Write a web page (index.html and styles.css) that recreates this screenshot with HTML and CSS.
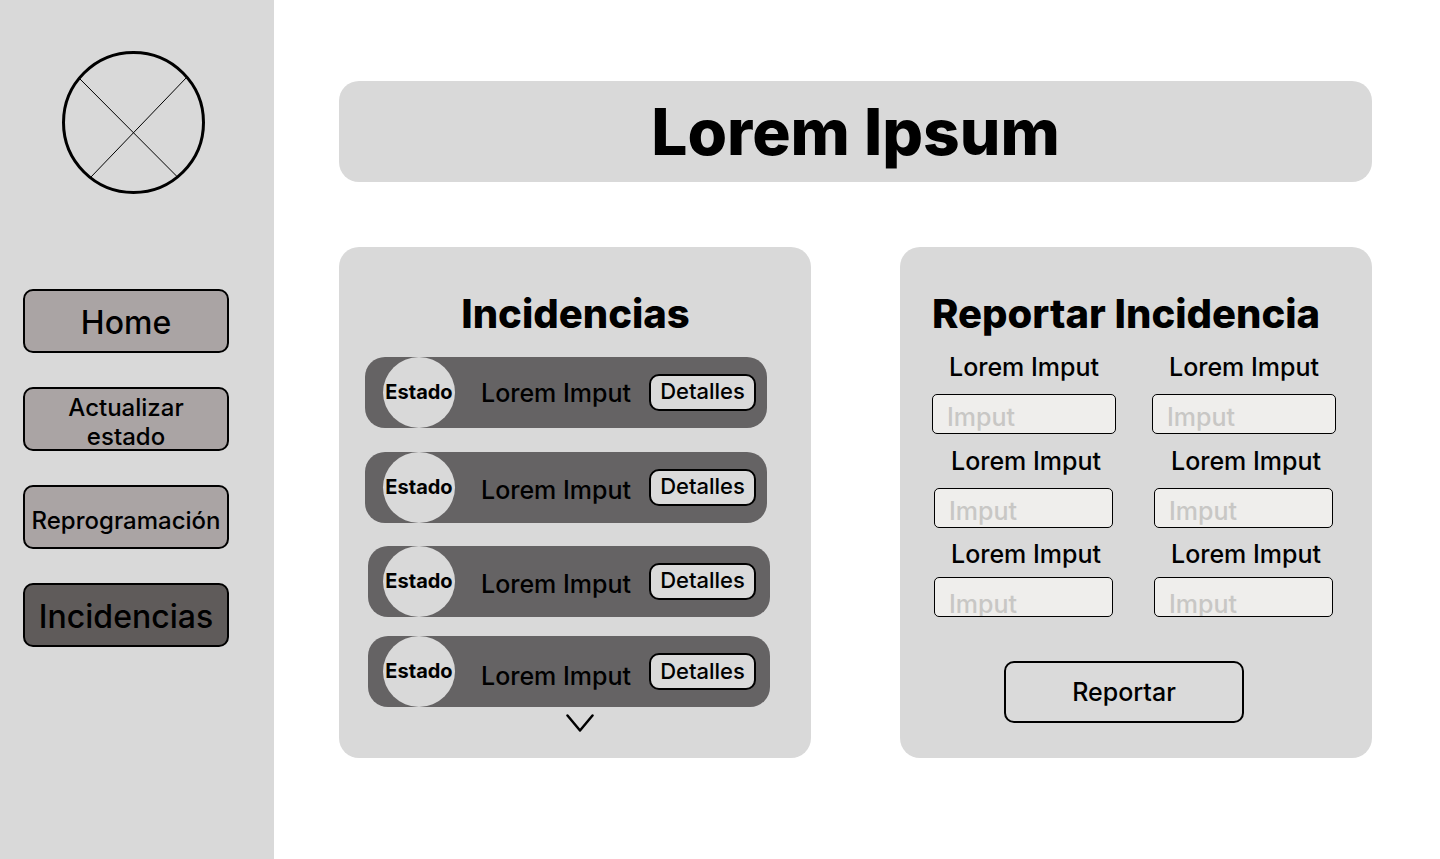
FILE: index.html
```html
<!DOCTYPE html>
<html lang="es">
<head>
  <meta charset="utf-8">
  <meta name="viewport" content="width=device-width, initial-scale=1">
  <title>Incidencias</title>
  <link rel="stylesheet" href="styles.css">
</head>
<body>
  <div class="layout">
    <aside class="sidebar">
      <svg class="logo" viewBox="0 0 143 143" role="img" aria-label="Logo">
        <circle cx="71.5" cy="71.5" r="70" fill="none" stroke="#000" stroke-width="3"/>
        <path d="M17.5 27.5L115.5 126M125 26L28.5 126.5" fill="none" stroke="#000" stroke-width="1"/>
      </svg>
      <nav class="nav">
        <a class="nav-item nav-item-large" href="#home">Home</a>
        <a class="nav-item" href="#estado">Actualizar estado</a>
        <a class="nav-item" href="#reprogramacion">Reprogramación</a>
        <a class="nav-item nav-item-large nav-item-active" href="#incidencias" aria-current="page">Incidencias</a>
      </nav>
    </aside>

    <main class="main">
      <header class="banner">
        <h1 class="banner-title">Lorem Ipsum</h1>
      </header>

      <div class="panels">
        <section class="panel">
          <h2 class="panel-title panel-title-centered">Incidencias</h2>
          <ul class="incidents">
            <li class="incident">
              <span class="status">Estado</span>
              <span class="incident-name">Lorem Imput</span>
              <button class="details" type="button">Detalles</button>
            </li>
            <li class="incident incident-low">
              <span class="status">Estado</span>
              <span class="incident-name">Lorem Imput</span>
              <button class="details" type="button">Detalles</button>
            </li>
            <li class="incident incident-low incident-inset">
              <span class="status">Estado</span>
              <span class="incident-name">Lorem Imput</span>
              <button class="details" type="button">Detalles</button>
            </li>
            <li class="incident incident-low incident-inset incident-last">
              <span class="status">Estado</span>
              <span class="incident-name">Lorem Imput</span>
              <button class="details" type="button">Detalles</button>
            </li>
          </ul>
          <button class="more" type="button" aria-label="Ver más">
            <svg class="more-icon" viewBox="0 0 28 20">
              <path d="M1.5 2.5L14 17.5L26.5 2.5" fill="none" stroke="#000" stroke-width="2.5" stroke-linecap="round" stroke-linejoin="round"/>
            </svg>
          </button>
        </section>

        <section class="panel">
          <h2 class="panel-title">Reportar Incidencia</h2>
          <form class="form">
            <div class="fields">
              <div class="field">
                <label class="field-label" for="f1">Lorem Imput</label>
                <input class="field-input" id="f1" type="text" placeholder="Imput">
              </div>
              <div class="field">
                <label class="field-label" for="f2">Lorem Imput</label>
                <input class="field-input" id="f2" type="text" placeholder="Imput">
              </div>
              <div class="field field-narrow">
                <label class="field-label" for="f3">Lorem Imput</label>
                <input class="field-input" id="f3" type="text" placeholder="Imput">
              </div>
              <div class="field field-narrow">
                <label class="field-label" for="f4">Lorem Imput</label>
                <input class="field-input" id="f4" type="text" placeholder="Imput">
              </div>
              <div class="field field-narrow field-tight">
                <label class="field-label" for="f5">Lorem Imput</label>
                <input class="field-input" id="f5" type="text" placeholder="Imput">
              </div>
              <div class="field field-narrow field-tight">
                <label class="field-label" for="f6">Lorem Imput</label>
                <input class="field-input" id="f6" type="text" placeholder="Imput">
              </div>
            </div>
            <div class="form-actions">
              <button class="submit" type="button">Reportar</button>
            </div>
          </form>
        </section>
      </div>
    </main>
  </div>
</body>
</html>
```

FILE: styles.css
```css
*,
*::before,
*::after {
  box-sizing: border-box;
}

body {
  margin: 0;
  background: #fff;
  color: #000;
  font-family: Inter, "Liberation Sans", sans-serif;
  font-size: 25px;
  font-weight: 500;
  line-height: 30px;
}

button,
input {
  font: inherit;
  color: inherit;
}

.layout {
  display: flex;
  min-height: 100vh;
}

/* Sidebar */
.sidebar {
  flex: none;
  width: 274px;
  padding: 51px 45px 51px 23px;
  background: #d9d9d9;
}

.logo {
  display: block;
  width: 143px;
  height: 143px;
  margin: 0 0 95px 39px;
}

.nav {
  display: flex;
  flex-direction: column;
  gap: 34px;
}

.nav-item {
  display: flex;
  align-items: center;
  justify-content: center;
  height: 64px;
  padding: 6px 4px 0;
  border: 2px solid #000;
  border-radius: 10px;
  background: #aaa4a4;
  color: #000;
  font-size: 24px;
  line-height: 29px;
  text-align: center;
  text-decoration: none;
}

.nav-item-large {
  padding-top: 3px;
  font-size: 32px;
}

.nav-item-active {
  background: #5f5b5a;
}

/* Main area */
.main {
  flex: 1;
  min-width: 0;
  padding: 81px 68px 81px 65px;
}

.banner {
  padding: 12px 24px 11px;
  border-radius: 20px;
  background: #d9d9d9;
  text-align: center;
}

.banner-title {
  margin: 0;
  font-size: 64px;
  font-weight: 800;
  line-height: 78px;
}

.panels {
  display: grid;
  grid-template-columns: 1fr 1fr;
  gap: 89px;
  margin-top: 65px;
}

.panel {
  padding: 43px 36px 25px 32px;
  border-radius: 20px;
  background: #d9d9d9;
}

.panel-title {
  margin: 0;
  font-size: 40px;
  font-weight: 800;
  line-height: 48px;
  white-space: nowrap;
}

.panel-title-centered {
  padding-left: 5px;
  text-align: center;
}

/* Incident list */
.incidents {
  display: flex;
  flex-direction: column;
  gap: 24px;
  margin: 19px 8px 0 -6px;
  padding: 0;
  list-style: none;
}

.incident {
  display: flex;
  align-items: center;
  height: 71px;
  padding: 0 11px 0 18px;
  border-radius: 20px;
  background: #656364;
}

.incident-inset {
  margin: -1px -3px 0 3px;
  padding: 0 14px 0 15px;
}

.incident-last {
  margin-top: -5px;
}

.status {
  display: flex;
  align-items: center;
  justify-content: center;
  width: 72px;
  height: 71px;
  padding-bottom: 2px;
  border-radius: 50%;
  background: #d9d9d9;
  font-size: 20px;
  font-weight: 700;
}

.incident-name {
  flex: 1;
  padding-left: 8px;
  text-align: center;
}

.incident-low .incident-name {
  padding-top: 5px;
}

.incident-last .incident-name {
  padding-top: 9px;
}

.details {
  width: 107px;
  height: 37px;
  padding: 0 0 2px;
  border: 2px solid #000;
  border-radius: 10px;
  background: #dadada;
  font-size: 22px;
  line-height: 27px;
}

.incident-last .details {
  padding-bottom: 0;
}

.more {
  display: block;
  margin: 6px auto 0;
  padding: 0 0 0 13px;
  border: 0;
  background: none;
}

.more-icon {
  display: block;
  width: 28px;
  height: 20px;
}

/* Report form */
.form {
  margin-top: 14px;
}

.fields {
  display: grid;
  grid-template-columns: 1fr 1fr;
  gap: 12px 36px;
}

.field {
  display: flex;
  flex-direction: column;
  gap: 12px;
  text-align: center;
}

.field-narrow {
  padding: 0 3px 0 2px;
}

.field-narrow .field-label {
  padding-left: 5px;
}

.field-tight {
  gap: 8px;
  margin-top: -1px;
}

.field-input {
  width: 100%;
  height: 40px;
  padding: 6px 14px 0;
  border: 1px solid #000;
  border-radius: 5px;
  background: #efeeec;
}

.field-tight .field-input {
  padding-top: 14px;
}

.field-input::placeholder {
  color: #c8c7c5;
  opacity: 1;
}

.form-actions {
  display: flex;
  justify-content: center;
  margin-top: 44px;
  padding-right: 20px;
}

.submit {
  width: 240px;
  height: 62px;
  border: 2px solid #000;
  border-radius: 10px;
  background: #dadada;
}
```
